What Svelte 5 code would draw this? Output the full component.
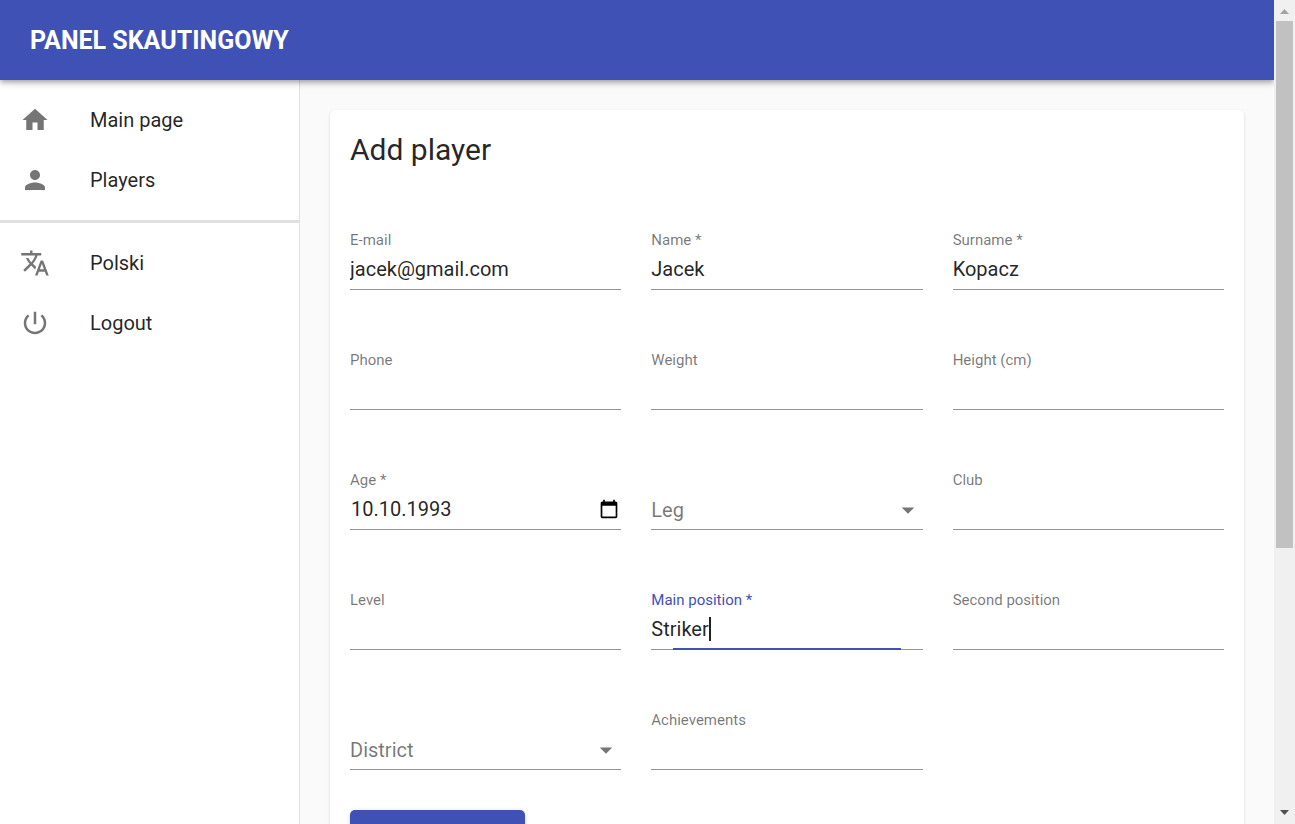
<script>
  const icons = {
    home: 'M10 20v-6h4v6h5v-8h3L12 3 2 12h3v8z',
    person: 'M12 12c2.21 0 4-1.79 4-4s-1.79-4-4-4-4 1.79-4 4 1.79 4 4 4zm0 2c-2.67 0-8 1.34-8 4v2h16v-2c0-2.66-5.33-4-8-4z',
    translate:
      'M12.87 15.07l-2.54-2.51.03-.03c1.74-1.94 2.98-4.17 3.71-6.53H17V4h-7V2H8v2H1v1.99h11.17C11.5 7.92 10.44 9.75 9 11.35 8.07 10.32 7.3 9.19 6.69 8h-2c.73 1.63 1.73 3.17 2.98 4.56l-5.09 5.02L4 19l5-5 3.11 3.11.76-2.04zM18.5 10h-2L12 22h2l1.12-3h4.75L21 22h2l-4.5-12zm-2.62 7l1.62-4.33L19.12 17h-3.24z',
    power:
      'M13 3h-2v10h2V3zm4.83 2.17l-1.42 1.42C17.99 7.86 19 9.81 19 12c0 3.87-3.13 7-7 7s-7-3.13-7-7c0-2.19 1.01-4.14 2.58-5.42L6.17 5.17C4.23 6.82 3 9.26 3 12c0 4.97 4.03 9 9 9s9-4.03 9-9c0-2.74-1.23-5.18-3.17-6.83z',
    arrow: 'M7 10l5 5 5-5z',
    calendar:
      'M20 3h-1V1h-2v2H7V1H5v2H4c-1.1 0-2 .9-2 2v16c0 1.1.9 2 2 2h16c1.1 0 2-.9 2-2V5c0-1.1-.9-2-2-2zm0 18H4V8h16v13z',
  };

  const pages = [
    { icon: 'home', text: 'Main page' },
    { icon: 'person', text: 'Players' },
  ];
  const actions = [
    { icon: 'translate', text: 'Polski' },
    { icon: 'power', text: 'Logout' },
  ];

  let fields = $state([
    { id: 'email', label: 'E-mail', kind: 'text', value: 'jacek@gmail.com' },
    { id: 'name', label: 'Name *', kind: 'text', value: 'Jacek' },
    { id: 'surname', label: 'Surname *', kind: 'text', value: 'Kopacz' },
    { id: 'phone', label: 'Phone', kind: 'text', value: '' },
    { id: 'weight', label: 'Weight', kind: 'text', value: '' },
    { id: 'height', label: 'Height (cm)', kind: 'text', value: '' },
    { id: 'age', label: 'Age *', kind: 'date', value: '10.10.1993' },
    { id: 'leg', label: 'Leg', kind: 'select', value: '' },
    { id: 'club', label: 'Club', kind: 'text', value: '' },
    { id: 'level', label: 'Level', kind: 'text', value: '' },
    { id: 'position', label: 'Main position *', kind: 'active', value: 'Striker' },
    { id: 'second', label: 'Second position', kind: 'text', value: '' },
    { id: 'district', label: 'District', kind: 'select', value: '' },
    { id: 'achievements', label: 'Achievements', kind: 'text', value: '' },
  ]);
</script>

{#snippet icon(name)}
  <svg class="icon" viewBox="0 0 24 24" aria-hidden="true"><path d={icons[name]} /></svg>
{/snippet}

{#snippet menu(items)}
  <ul>
    {#each items as item}
      <li><a href="#{item.icon}">{@render icon(item.icon)}<span>{item.text}</span></a></li>
    {/each}
  </ul>
{/snippet}

<div class="window">
  <div class="app">
    <header><h1>PANEL SKAUTINGOWY</h1></header>
    <div class="body">
      <nav>
        {@render menu(pages)}
        <hr />
        {@render menu(actions)}
      </nav>
      <main>
        <form class="card" onsubmit={(e) => e.preventDefault()}>
          <h2>Add player</h2>
          <div class="fields">
            {#each fields as field (field.id)}
              <div class="field {field.kind}">
                <label for={field.id}>{field.label}</label>
                <div class="control">
                  {#if field.kind === 'select'}
                    <select id={field.id} bind:value={field.value}><option value=""></option></select>
                    {@render icon('arrow')}
                  {:else}
                    <input id={field.id} type="text" bind:value={field.value} />
                    {#if field.kind === 'date'}
                      <button type="button" class="picker" aria-label="Choose date">{@render icon('calendar')}</button>
                    {:else if field.kind === 'active'}
                      <span class="caret"></span>
                    {/if}
                  {/if}
                </div>
              </div>
            {/each}
          </div>
          <button type="submit" class="submit">Add player</button>
        </form>
      </main>
    </div>
  </div>
  <div class="scrollbar" aria-hidden="true">
    <svg viewBox="0 0 21 21"><path d="M6 14h9l-4.500-5z" fill="#a3a3a3" /></svg>
    <div class="track"><div class="thumb"></div></div>
    <svg viewBox="0 0 21 21"><path d="M6 7h9l-4.500 5z" fill="#505050" /></svg>
  </div>
</div>

<style>
  :global(body) {
    margin: 0;
  }
  .window {
    display: flex;
    height: 100vh;
    overflow: hidden;
    background: #fafafa;
    color: rgba(0, 0, 0, 0.87);
    font-family: Roboto, sans-serif;
    font-size: 20px;
    line-height: 30px;
  }
  .window * {
    box-sizing: border-box;
  }
  .app {
    display: flex;
    flex: 1;
    flex-direction: column;
    min-width: 0;
    overflow: hidden;
  }
  header {
    position: relative;
    z-index: 1;
    display: flex;
    flex: none;
    align-items: center;
    height: 80px;
    padding: 2px 30px 0;
    background: #3f51b5;
    color: #fff;
    box-shadow:
      0 2px 4px -1px rgba(0, 0, 0, 0.2),
      0 4px 5px rgba(0, 0, 0, 0.14),
      0 1px 10px rgba(0, 0, 0, 0.12);
  }
  h1 {
    margin: 0;
    font-size: 25px;
    font-weight: 700;
    line-height: 40px;
  }
  .body {
    display: flex;
    flex: 1;
    min-height: 0;
  }
  nav {
    flex: none;
    width: 300px;
    border-right: 1px solid rgba(0, 0, 0, 0.12);
    background: #fff;
  }
  ul {
    margin: 0;
    padding: 10px 0;
    list-style: none;
  }
  nav a {
    display: flex;
    align-items: center;
    gap: 40px;
    height: 60px;
    padding: 0 20px;
    color: inherit;
    text-decoration: none;
  }
  hr {
    height: 3px;
    margin: 0;
    border: 0;
    background: #e0e0e0;
  }
  .icon {
    flex: none;
    width: 30px;
    height: 30px;
    fill: #757575;
  }
  main {
    flex: 1;
    min-width: 0;
    padding: 30px;
    overflow-y: auto;
    scrollbar-width: none;
  }
  .card {
    padding: 20px;
    border-radius: 5px;
    background: #fff;
    box-shadow:
      0 2px 1px -1px rgba(0, 0, 0, 0.2),
      0 1px 1px rgba(0, 0, 0, 0.14),
      0 1px 3px rgba(0, 0, 0, 0.12);
  }
  h2 {
    margin: 0 0 60px;
    font-size: 30px;
    font-weight: 400;
    line-height: 40px;
  }
  .fields {
    display: grid;
    grid-template-columns: repeat(3, minmax(0, 1fr));
    gap: 60px 30px;
  }
  .field {
    display: grid;
    grid-template-rows: 20px 40px;
    grid-template-columns: minmax(0, 1fr);
  }
  label {
    color: rgba(0, 0, 0, 0.54);
    font-size: 15px;
    line-height: 20px;
  }
  .control {
    position: relative;
    display: flex;
    align-items: center;
    padding-bottom: 2px;
    border-bottom: 1px solid #949494;
  }
  input,
  select {
    flex: 1;
    min-width: 0;
    height: 30px;
    padding: 0;
    border: 0;
    outline: 0;
    background: none;
    color: inherit;
    font: inherit;
    appearance: none;
  }
  .select label,
  .select .control {
    grid-area: 2 / 1;
  }
  .select .control {
    padding-bottom: 0;
  }
  .select label {
    font-size: 20px;
    line-height: 40px;
    pointer-events: none;
  }
  .date .control {
    padding-right: 2px;
    padding-left: 1px;
  }
  .picker {
    display: flex;
    padding: 0;
    border: 0;
    background: none;
  }
  .picker .icon {
    width: 20px;
    height: 20px;
    fill: #000;
  }
  .active label {
    color: #3f51b5;
  }
  .active input {
    flex: none;
    field-sizing: content;
  }
  .caret {
    width: 2px;
    height: 24px;
    background: #212121;
  }
  .active .control::after {
    content: '';
    position: absolute;
    right: 8%;
    bottom: -1px;
    left: 8%;
    height: 2px;
    background: #3f51b5;
  }
  .submit {
    min-width: 175px;
    height: 52px;
    margin-top: 40px;
    padding: 0 20px;
    border: 0;
    border-radius: 5px;
    background: #3f51b5;
    color: #fff;
    font: 500 18px/20px Roboto, sans-serif;
    text-transform: uppercase;
    box-shadow:
      0 3px 1px -2px rgba(0, 0, 0, 0.2),
      0 2px 2px rgba(0, 0, 0, 0.14),
      0 1px 5px rgba(0, 0, 0, 0.12);
  }
  .scrollbar {
    display: flex;
    flex: none;
    flex-direction: column;
    width: 21px;
    background: #f0f0f0;
  }
  .scrollbar svg {
    flex: none;
    width: 21px;
    height: 21px;
  }
  .track {
    flex: 1;
    padding: 0 2px;
  }
  .thumb {
    height: 67.4%;
    background: #c1c1c1;
  }
</style>
